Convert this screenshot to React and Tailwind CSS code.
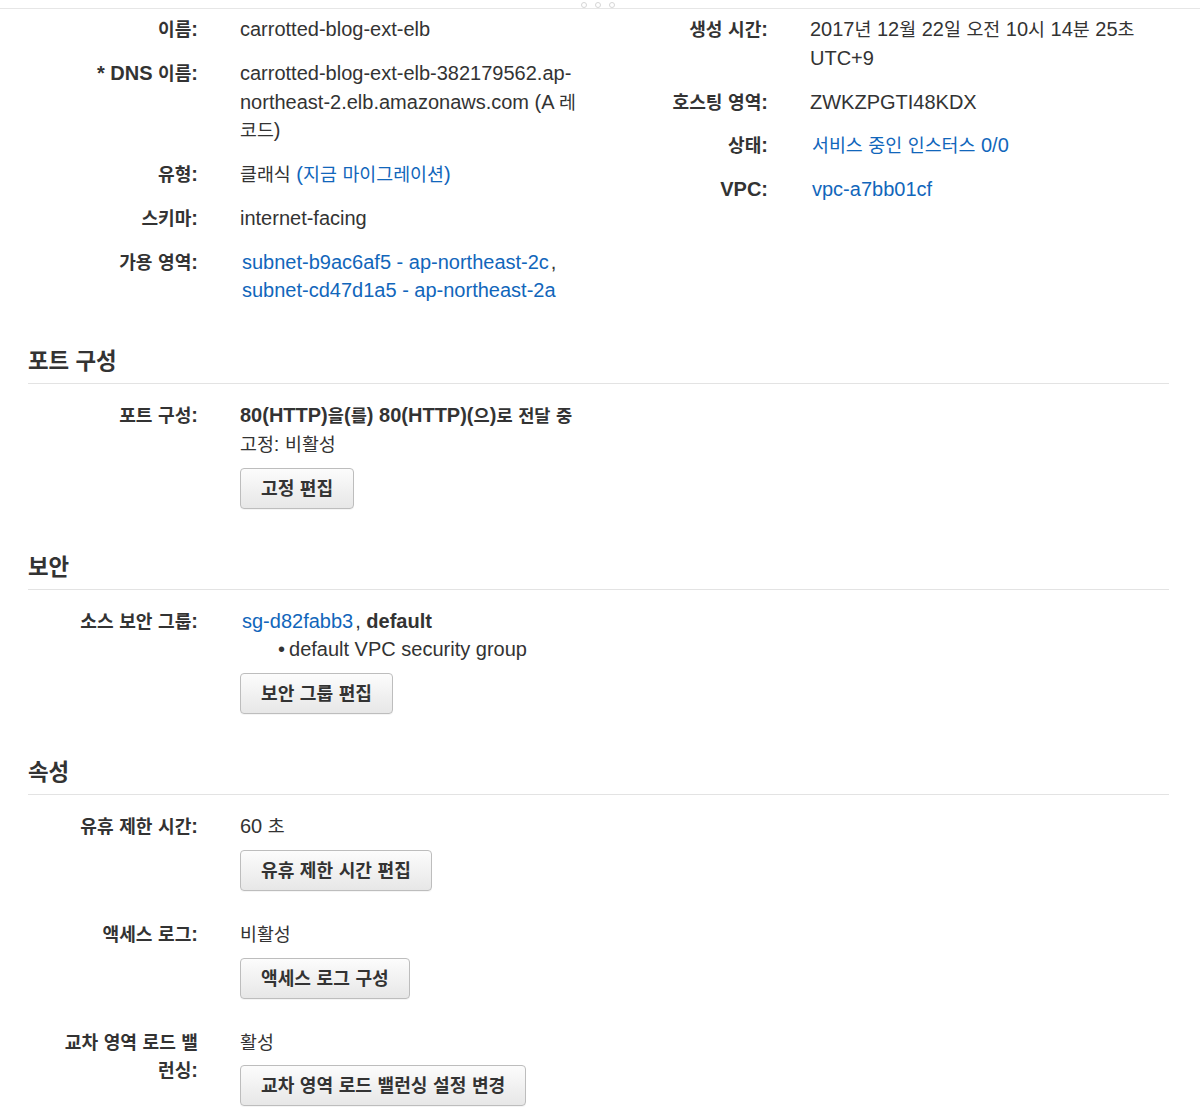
import React from "react";

const HANGUL = /([\uAC00-\uD7A3]+)/;

function K({ t, k = "text-[18.4px] leading-none" }) {
  const parts = t.split(HANGUL);
  return (
    <>
      {parts.map((p, i) =>
        /[\uAC00-\uD7A3]/.test(p) ? (
          <span key={i} className={k}>
            {p}
          </span>
        ) : (
          <React.Fragment key={i}>{p}</React.Fragment>
        )
      )}
    </>
  );
}

const LINK = "text-[#1166bb]";

function Label({ t, className = "" }) {
  return (
    <div className={`text-right font-bold text-[#333] ${className}`}>
      <K t={t} k="text-[18.1px] leading-none" />
    </div>
  );
}

function TopRow({ label, children }) {
  return (
    <div className="grid grid-cols-[170px_345px] gap-x-[42px]">
      <Label t={label} />
      <div className="text-[#333]">{children}</div>
    </div>
  );
}

function Btn({ t }) {
  return (
    <div className="mt-[9px] flex">
      <button className="flex h-[41px] items-center rounded-[4px] border border-[#bdbdbd] bg-linear-to-b from-[#fcfcfc] to-[#e7e7e7] px-[20px] font-bold text-[#333] shadow-[0_1px_0_rgba(0,0,0,0.04)]">
        <span>
          <K t={t} k="text-[18.1px] leading-none" />
        </span>
      </button>
    </div>
  );
}

function Row({ label, labelClass = "", children }) {
  return (
    <div className="grid grid-cols-[170px_1fr] gap-x-[42px]">
      <Label t={label} className={labelClass} />
      <div className="text-[#333]">{children}</div>
    </div>
  );
}

function Section({ title, top = "mt-[43px]", children }) {
  return (
    <div className={top}>
      <div className="border-b border-[#e3e3e3] pb-[7px] pt-[2px]">
        <h2 className="text-[22.4px] font-bold leading-[28px] text-[#333]">{title}</h2>
      </div>
      <div className="flex flex-col gap-[29px] pt-[17px]">{children}</div>
    </div>
  );
}

export default function App() {
  return (
    <div className="min-h-[1112px] w-[1200px] bg-white font-['Liberation_Sans','Noto_Sans_CJK_KR',sans-serif] text-[20px] leading-[28.75px] text-[#333]">
      <div className="flex h-[9px] justify-center gap-[8px] border-b border-[#e6e6e6] pr-[4px] pt-[2px]">
        <span className="h-[6px] w-[6px] rounded-full border border-[#d6d6d6]" />
        <span className="h-[6px] w-[6px] rounded-full border border-[#d6d6d6]" />
        <span className="h-[6px] w-[6px] rounded-full border border-[#d6d6d6]" />
      </div>

      <div className="pl-[28px] pr-[31px]">
        <div className="grid grid-cols-[570px_1fr] pt-[6px]">
          <div className="flex flex-col gap-[15px]">
            <TopRow label="이름:">carrotted-blog-ext-elb</TopRow>
            <TopRow label="* DNS 이름:">
              <K t="carrotted-blog-ext-elb-382179562.ap-northeast-2.elb.amazonaws.com (A 레코드)" />
            </TopRow>
            <TopRow label="유형:">
              <K t="클래식 " />
              <a className={LINK}>
                <K t="(지금 마이그레이션)" />
              </a>
            </TopRow>
            <TopRow label="스키마:">internet-facing</TopRow>
            <TopRow label="가용 영역:">
              <div>
                <a className={`${LINK} ml-[2px]`}>subnet-b9ac6af5 - ap-northeast-2c</a>
                <span className="ml-[2px]">,</span>
              </div>
              <div>
                <a className={`${LINK} ml-[2px]`}>subnet-cd47d1a5 - ap-northeast-2a</a>
              </div>
            </TopRow>
          </div>
          <div className="flex flex-col gap-[15px]">
            <TopRow label="생성 시간:">
              <K t="2017년 12월 22일 오전 10시 14분 25초 UTC+9" />
            </TopRow>
            <TopRow label="호스팅 영역:">ZWKZPGTI48KDX</TopRow>
            <TopRow label="상태:">
              <a className={`${LINK} ml-[2px]`}>
                <K t="서비스 중인 인스터스 0/0" />
              </a>
            </TopRow>
            <TopRow label="VPC:">
              <a className={`${LINK} ml-[2px]`}>vpc-a7bb01cf</a>
            </TopRow>
          </div>
        </div>

        <Section title="포트 구성" top="mt-[41px]">
          <Row label="포트 구성:">
            <div className="font-bold">
              <K t="80(HTTP)을(를) 80(HTTP)(으)로 전달 중" k="text-[17.6px] leading-none" />
            </div>
            <div>
              <K t="고정: 비활성" />
            </div>
            <Btn t="고정 편집" />
          </Row>
        </Section>

        <Section title="보안">
          <Row label="소스 보안 그룹:">
            <div>
              <a className={`${LINK} ml-[2px]`}>sg-d82fabb3</a>
              <span className="ml-[2px]">, </span>
              <span className="font-bold">default</span>
            </div>
            <div className="pl-[38px]">
              <span className="mr-[4px]">•</span>default VPC security group
            </div>
            <Btn t="보안 그룹 편집" />
          </Row>
        </Section>

        <Section title="속성">
          <Row label="유휴 제한 시간:">
            <div>
              <K t="60 초" />
            </div>
            <Btn t="유휴 제한 시간 편집" />
          </Row>
          <Row label="액세스 로그:">
            <div>
              <K t="비활성" />
            </div>
            <Btn t="액세스 로그 구성" />
          </Row>
          <Row label="교차 영역 로드 밸런싱:" labelClass="pl-[24px]">
            <div>
              <K t="활성" />
            </div>
            <Btn t="교차 영역 로드 밸런싱 설정 변경" />
          </Row>
        </Section>
      </div>
    </div>
  );
}
